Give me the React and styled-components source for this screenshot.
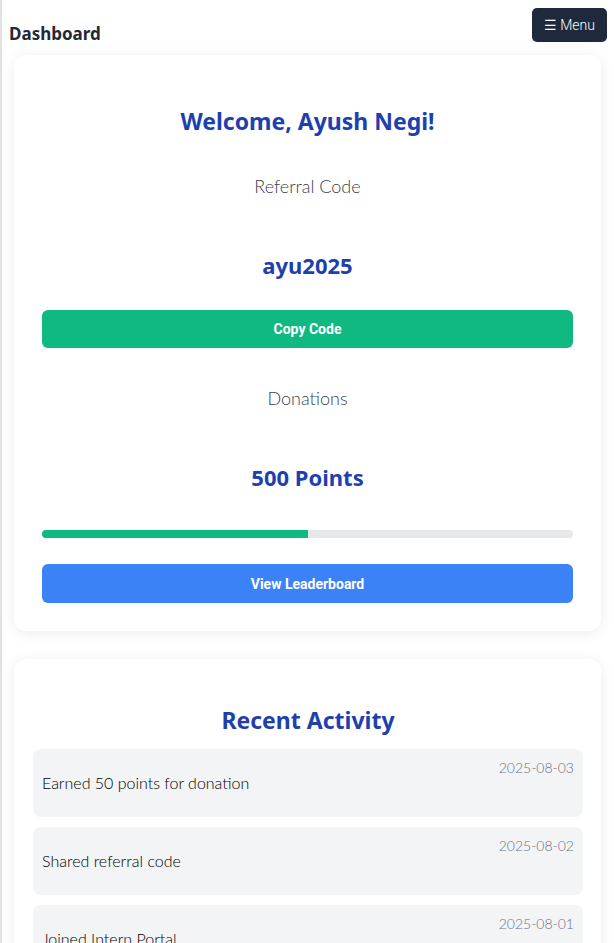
import React from "react";
import styled, { createGlobalStyle } from "styled-components";

const GlobalStyle = createGlobalStyle`
  * {
    box-sizing: border-box;
  }
  body {
    margin: 0;
    background: #ffffff;
    font-family: "Noto Sans", "Open Sans", sans-serif;
    color: #111827;
  }
`;

const lightFont = `"Lato", "Noto Sans", sans-serif`;

const Page = styled.div`
  min-height: 943px;
  border-left: 2px solid #e2e2e2;
`;

const Header = styled.header`
  display: flex;
  justify-content: space-between;
  align-items: flex-start;
  padding: 8px 7px 0 7px;
`;

const PageTitle = styled.h1`
  margin: 14px 0 0;
  font-size: 17px;
  line-height: 24px;
  font-weight: 700;
  color: #1f2937;
`;

const MenuButton = styled.button`
  height: 34px;
  padding: 0 12px;
  border: none;
  border-radius: 5px;
  background: #1e293b;
  color: #ffffff;
  font: 300 14px/1 "Roboto", sans-serif;
  cursor: pointer;
`;

const Main = styled.main`
  display: flex;
  flex-direction: column;
  gap: 28px;
  padding: 9px 13px 0 12px;
`;

const Card = styled.section`
  display: flex;
  flex-direction: column;
  align-items: center;
  padding: ${({ $pad }) => $pad};
  background: #ffffff;
  border-radius: 12px;
  box-shadow: 0 2px 14px rgba(0, 0, 0, 0.08);
`;

const Heading = styled.h2`
  margin: ${({ $top }) => $top}px 0 0;
  font-size: 23px;
  line-height: 32px;
  font-weight: 700;
  color: #1e40af;
`;

const Label = styled.p`
  margin: ${({ $top }) => $top}px 0 0;
  font-family: ${lightFont};
  font-size: 18px;
  line-height: 26px;
  font-weight: 300;
  color: #374151;
`;

const Value = styled.p`
  margin: 51px 0 0;
  font-size: ${({ $size }) => $size}px;
  line-height: 30px;
  font-weight: 700;
  color: #1e40af;
`;

const ActionButton = styled.button`
  width: 100%;
  height: ${({ $h }) => $h}px;
  margin-top: ${({ $top }) => $top}px;
  border: none;
  border-radius: 6px;
  background: ${({ $bg }) => $bg};
  color: #ffffff;
  font: 700 14px/1 "Roboto", "Liberation Sans", sans-serif;
  cursor: pointer;
`;

const Track = styled.div`
  width: 100%;
  height: 8px;
  margin-top: 38px;
  border-radius: 4px;
  background: #e5e7eb;
  overflow: hidden;
`;

const Fill = styled.div`
  height: 100%;
  background: #10b981;
`;

const ActivityList = styled.ul`
  list-style: none;
  width: 100%;
  margin: 13px 0 0;
  padding: 0;
  display: flex;
  flex-direction: column;
  gap: 10px;
`;

const ActivityItem = styled.li`
  display: flex;
  justify-content: space-between;
  align-items: center;
  padding: 9px;
  border-radius: 8px;
  background: #f3f4f6;
`;

const ActivityText = styled.p`
  margin: 14px 0;
  font-family: ${lightFont};
  font-size: 16px;
  line-height: 22px;
  font-weight: 300;
  color: #000000;
`;

const ActivityDate = styled.span`
  align-self: flex-start;
  font-family: ${lightFont};
  font-size: 14px;
  line-height: 20px;
  font-weight: 300;
  color: #6b7280;
`;

const activities = [
  { text: "Earned 50 points for donation", date: "2025-08-03" },
  { text: "Shared referral code", date: "2025-08-02" },
  { text: "Joined Intern Portal", date: "2025-08-01" },
];

const App = () => {
  const points = 500;
  const goal = 1000;

  return (
    <Page>
      <GlobalStyle />
      <Header>
        <PageTitle>Dashboard</PageTitle>
        <MenuButton>☰ Menu</MenuButton>
      </Header>
      <Main>
        <Card $pad="28px">
          <Heading $top={22}>Welcome, Ayush Negi!</Heading>
          <Label $top={36}>Referral Code</Label>
          <Value $size={22}>ayu2025</Value>
          <ActionButton $bg="#10b981" $h={38} $top={30}>
            Copy Code
          </ActionButton>
          <Label $top={37}>Donations</Label>
          <Value $size={22}>{points} Points</Value>
          <Track>
            <Fill style={{ width: `${(points / goal) * 100}%` }} />
          </Track>
          <ActionButton $bg="#3b82f6" $h={39} $top={26}>
            View Leaderboard
          </ActionButton>
        </Card>
        <Card $pad="19px 18px 19px 19px">
          <Heading $top={26}>Recent Activity</Heading>
          <ActivityList>
            {activities.map((item) => (
              <ActivityItem key={item.date}>
                <ActivityText>{item.text}</ActivityText>
                <ActivityDate>{item.date}</ActivityDate>
              </ActivityItem>
            ))}
          </ActivityList>
        </Card>
      </Main>
    </Page>
  );
};

export default App;
